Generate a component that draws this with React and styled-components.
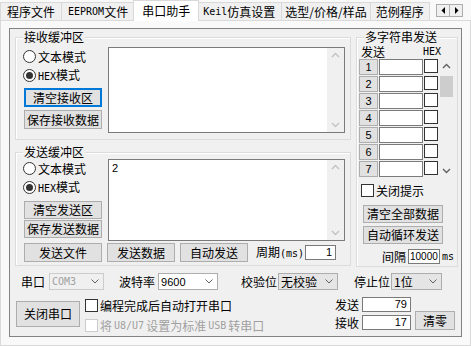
import React from "react";
import styled, { createGlobalStyle } from "styled-components";

const GlobalStyle = createGlobalStyle`
  html, body {
    margin: 0;
    padding: 0;
  }
  body {
    background: #f9f9f9;
    font-family: "Noto Sans CJK SC", "Liberation Sans", sans-serif;
    font-size: 12px;
    line-height: 14px;
    color: #000;
  }
`;

const Window = styled.div`
  width: 471px;
  height: 346px;
  display: flex;
  flex-direction: column;
  background: #f9f9f9;
  overflow: hidden;
`;

const TabStrip = styled.div`
  height: 20px;
  display: flex;
  align-items: flex-end;
  position: relative;
  z-index: 1;
`;

const Tab = styled.div`
  box-sizing: border-box;
  height: ${(p) => (p.$active ? 21 : 18)}px;
  margin: 0 ${(p) => (p.$active ? -2 : 0)}px ${(p) => (p.$active ? -1 : 0)}px;
  margin-left: ${(p) => (p.$active ? -2 : -1)}px;
  padding: 0 ${(p) => (p.$active ? 8 : p.$px ?? 6)}px;
  display: flex;
  align-items: center;
  background: ${(p) => (p.$active ? "#ffffff" : "#f0f0f0")};
  border: 1px solid #d9d9d9;
  border-bottom: none;
  white-space: nowrap;
  position: relative;
  z-index: ${(p) => (p.$active ? 2 : 1)};
  &:first-child {
    margin-left: 0;
  }
`;

const TabArrows = styled.div`
  margin-left: auto;
  margin-right: 8px;
  align-self: center;
  display: flex;
  background: #f0f0f0;
  position: relative;
  z-index: 3;
`;

const ArrowBox = styled.div`
  width: 14px;
  height: 13px;
  box-sizing: border-box;
  border: 1px solid #adadad;
  margin-left: -1px;
  display: flex;
  align-items: center;
  justify-content: center;
  background: #f0f0f0;
`;

const TabBody = styled.div`
  flex: 1;
  box-sizing: border-box;
  border: 1px solid #d9d9d9;
  padding: 7px 8px 8px;
  background: #f9f9f9;
`;

const Frame = styled.div`
  box-sizing: border-box;
  height: 309px;
  border: 1px solid #828282;
  background: #f0f0f0;
  display: flex;
  flex-direction: column;
`;

const TopArea = styled.div`
  display: flex;
  gap: 5px;
  padding: 1px 0 0 5px;
`;

const LeftCol = styled.div`
  width: 336px;
  display: flex;
  flex-direction: column;
  gap: 5px;
`;

const Group = styled.fieldset`
  box-sizing: border-box;
  margin: 0;
  min-width: 0;
  width: ${(p) => p.$w}px;
  height: ${(p) => p.$h}px;
  padding: ${(p) => p.$pad};
  border: 1px solid #dcdcdc;
  box-shadow: inset 1px 1px 0 #ffffff;
`;

const Legend = styled.legend`
  padding: 0 1px;
  margin-left: ${(p) => p.$ml || 0}px;
  line-height: 14px;
  background: #f0f0f0;
`;

const BufferGrid = styled.div`
  display: grid;
  grid-template-columns: 79px 1fr;
  column-gap: 6px;
`;

const SideCol = styled.div`
  display: flex;
  flex-direction: column;
`;

const RadioRow = styled.label`
  height: 19px;
  display: flex;
  align-items: center;
  gap: 2px;
`;

const RadioDot = styled.span`
  box-sizing: border-box;
  width: 13px;
  height: 13px;
  border-radius: 50%;
  border: 1px solid #333333;
  background: #ffffff;
  display: flex;
  align-items: center;
  justify-content: center;
  &::after {
    content: "";
    width: 7px;
    height: 7px;
    border-radius: 50%;
    background: #333333;
    display: ${(p) => (p.$checked ? "block" : "none")};
  }
`;

const Btn = styled.button`
  box-sizing: border-box;
  width: ${(p) => p.$w}px;
  height: ${(p) => p.$h || 19}px;
  margin: ${(p) => p.$m || 0};
  padding: 0;
  flex: none;
  background: #e1e1e1;
  border: 1px solid ${(p) => (p.$focus ? "#0078d7" : "#adadad")};
  box-shadow: ${(p) => (p.$focus ? "inset 0 0 0 1px #0078d7" : "none")};
  font: inherit;
  line-height: 14px;
  color: #000;
`;

const Memo = styled.div`
  box-sizing: border-box;
  height: ${(p) => p.$h}px;
  border: 1px solid #7a7a7a;
  background: #ffffff;
  display: flex;
`;

const MemoText = styled.div`
  flex: 1;
  padding: 1px 3px;
  font-family: "Liberation Sans", sans-serif;
  font-size: 11px;
`;

const VScroll = styled.div`
  width: ${(p) => p.$w || 17}px;
  flex: none;
  background: #f0f0f0;
  display: flex;
  flex-direction: column;
  align-items: center;
  padding: 4px 0;
  box-sizing: border-box;
  & > svg:last-child {
    margin-top: auto;
  }
`;

const Thumb = styled.div`
  width: 13px;
  height: 21px;
  background: #cdcdcd;
  margin-top: 7px;
`;

const SendRow = styled.div`
  display: flex;
  align-items: center;
  margin-top: 2px;
  gap: 5px;
`;

const Caption = styled.span`
  margin-left: ${(p) => p.$ml || 0}px;
  white-space: nowrap;
`;

const Mono = styled.span`
  font-family: "DejaVu Sans Mono", "Liberation Mono", monospace;
  font-size: 10px;
`;

const NumBox = styled.div`
  box-sizing: border-box;
  width: ${(p) => p.$w}px;
  height: 15px;
  margin-left: ${(p) => p.$ml || 0}px;
  border: 1px solid #7a7a7a;
  background: #ffffff;
  font-family: "Liberation Sans", sans-serif;
  font-size: ${(p) => p.$fs || 11}px;
  line-height: 13px;
  text-align: ${(p) => p.$align || "right"};
  padding: 0 ${(p) => p.$px ?? 3}px;
  overflow: hidden;
  white-space: nowrap;
`;

const MultiHeader = styled.div`
  height: 15px;
  display: flex;
  justify-content: space-between;
  align-items: flex-end;
  padding: 0 14px 0 2px;
`;

const MultiList = styled.div`
  display: flex;
  gap: 1px;
  height: 119px;
`;

const MultiRows = styled.div`
  display: flex;
  flex-direction: column;
  gap: 1px;
`;

const MultiRow = styled.div`
  height: 16px;
  display: flex;
  gap: 1px;
  align-items: flex-start;
`;

const IdxBtn = styled.div`
  box-sizing: border-box;
  width: 19px;
  height: 16px;
  background: #e1e1e1;
  border: 1px solid #adadad;
  font-family: "Liberation Sans", sans-serif;
  font-size: 11px;
  line-height: 14px;
  text-align: center;
`;

const TextCell = styled.div`
  box-sizing: border-box;
  width: 44px;
  height: 16px;
  border: 1px solid #7a7a7a;
  background: #ffffff;
`;

const Check = styled.span`
  box-sizing: border-box;
  width: ${(p) => p.$s || 13}px;
  height: ${(p) => p.$s || 13}px;
  flex: none;
  border: 1px solid ${(p) => (p.$disabled ? "#cccccc" : "#333333")};
  background: #ffffff;
`;

const CheckRow = styled.label`
  display: flex;
  align-items: center;
  gap: 2px;
  height: 13px;
  margin: ${(p) => p.$m || 0};
  color: ${(p) => (p.$disabled ? "#a0a0a0" : "#000")};
  white-space: nowrap;
`;

const IntervalRow = styled.div`
  display: flex;
  align-items: center;
  justify-content: flex-end;
  margin-top: 5px;
  gap: 2px;
  padding-right: 1px;
`;

const PortRow = styled.div`
  display: flex;
  align-items: center;
  height: 17px;
  margin-top: 6px;
  padding-left: 11px;
`;

const Combo = styled.div`
  box-sizing: border-box;
  width: ${(p) => p.$w}px;
  height: 17px;
  margin-left: ${(p) => p.$ml || 0}px;
  border: 1px solid ${(p) => (p.$disabled ? "#cccccc" : "#adadad")};
  background: ${(p) => (p.$disabled ? "#f0f0f0" : p.$edit ? "#ffffff" : "#e5e5e5")};
  color: ${(p) => (p.$disabled ? "#a0a0a0" : "#000")};
  display: flex;
  align-items: center;
  justify-content: space-between;
  padding: 0 4px 0 2px;
  white-space: nowrap;
`;

const ComboNum = styled.span`
  font-family: "Liberation Sans", sans-serif;
  font-size: 11px;
`;

const LowerArea = styled.div`
  display: flex;
  align-items: flex-start;
  margin-top: 7px;
  padding: 0 6px;
`;

const CheckCol = styled.div`
  display: flex;
  flex-direction: column;
  gap: 7px;
  margin: 2px 0 0 5px;
`;

const CounterCol = styled.div`
  margin-left: auto;
  display: flex;
  flex-direction: column;
  gap: 3px;
`;

const CounterRow = styled.div`
  display: flex;
  align-items: center;
  height: 15px;
`;

const Chevron = ({ up, color = "#c2c2c2" }) => (
  <svg width="9" height="6" viewBox="0 0 9 6">
    <polyline
      points={up ? "1,5 4.5,1.5 8,5" : "1,1 4.5,4.5 8,1"}
      fill="none"
      stroke={color}
      strokeWidth="1.4"
    />
  </svg>
);

const DropArrow = () => (
  <svg width="8" height="5" viewBox="0 0 8 5">
    <polyline points="0.5,0.5 4,4 7.5,0.5" fill="none" stroke="#606060" strokeWidth="1" />
  </svg>
);

const Tri = ({ left }) => (
  <svg width="5" height="7" viewBox="0 0 5 7">
    <polygon points={left ? "4,0 4,7 0.5,3.5" : "1,0 1,7 4.5,3.5"} fill="#000" />
  </svg>
);

const Radio = ({ checked, children }) => (
  <RadioRow>
    <RadioDot $checked={checked} />
    <span>{children}</span>
  </RadioRow>
);

const TextArea = ({ h, text }) => (
  <Memo $h={h}>
    <MemoText>{text}</MemoText>
    <VScroll>
      <Chevron up />
      <Chevron />
    </VScroll>
  </Memo>
);

export default function App() {
  return (
    <Window>
      <GlobalStyle />
      <TabStrip>
        <Tab>程序文件</Tab>
        <Tab>
          <Mono>EEPROM</Mono>文件
        </Tab>
        <Tab $active>串口助手</Tab>
        <Tab>
          <Mono>Keil</Mono>仿真设置
        </Tab>
        <Tab $px={3}>选型/价格/样品</Tab>
        <Tab $px={5}>范例程序</Tab>
        <TabArrows>
          <ArrowBox>
            <Tri left />
          </ArrowBox>
          <ArrowBox>
            <Tri />
          </ArrowBox>
        </TabArrows>
      </TabStrip>
      <TabBody>
        <Frame>
          <TopArea>
            <LeftCol>
              <Group $w={336} $h={110} $pad="3px 5px 6px 7px">
                <Legend>接收缓冲区</Legend>
                <BufferGrid>
                  <SideCol>
                    <Radio>文本模式</Radio>
                    <Radio checked>
                      <Mono>HEX</Mono>模式
                    </Radio>
                    <Btn $w={78} $m="3px 0 0 1px" $focus>
                      清空接收区
                    </Btn>
                    <Btn $w={78} $m="3px 0 0 1px">
                      保存接收数据
                    </Btn>
                  </SideCol>
                  <TextArea h={86} />
                </BufferGrid>
              </Group>
              <Group $w={336} $h={121} $pad="0 5px 2px 7px">
                <Legend>发送缓冲区</Legend>
                <BufferGrid>
                  <SideCol>
                    <Radio>文本模式</Radio>
                    <Radio checked>
                      <Mono>HEX</Mono>模式
                    </Radio>
                    <Btn $w={78} $h={18} $m="4px 0 0 1px">
                      清空发送区
                    </Btn>
                    <Btn $w={78} $h={18} $m="1px 0 0 1px">
                      保存发送数据
                    </Btn>
                  </SideCol>
                  <TextArea h={82} text="2" />
                </BufferGrid>
                <SendRow>
                  <Btn $w={78} $m="0 0 0 1px">
                    发送文件
                  </Btn>
                  <Btn $w={68}>发送数据</Btn>
                  <Btn $w={68}>自动发送</Btn>
                  <Caption $ml={3}>
                    周期<Mono>(ms)</Mono>
                  </Caption>
                  <NumBox $w={31} $ml={-4}>
                    1
                  </NumBox>
                </SendRow>
              </Group>
            </LeftCol>
            <Group $w={102} $h={237} $pad="0 2px">
              <Legend $ml={5}>多字符串发送</Legend>
              <MultiHeader>
                <span>发送</span>
                <Mono>HEX</Mono>
              </MultiHeader>
              <MultiList>
                <MultiRows>
                  {[1, 2, 3, 4, 5, 6, 7].map((n) => (
                    <MultiRow key={n}>
                      <IdxBtn>{n}</IdxBtn>
                      <TextCell />
                      <Check $s={14} />
                    </MultiRow>
                  ))}
                </MultiRows>
                <VScroll $w={15}>
                  <Chevron up color="#606060" />
                  <Thumb />
                  <Chevron color="#606060" />
                </VScroll>
              </MultiList>
              <CheckRow $m="6px 0 0 2px">
                <Check />
                关闭提示
              </CheckRow>
              <Btn $w={80} $h={18} $m="8px 0 0 4px">
                清空全部数据
              </Btn>
              <Btn $w={80} $h={18} $m="3px 0 0 4px">
                自动循环发送
              </Btn>
              <IntervalRow>
                <span>间隔</span>
                <NumBox $w={32} $align="left" $fs={10} $px={1}>
                  10000
                </NumBox>
                <Mono>ms</Mono>
              </IntervalRow>
            </Group>
          </TopArea>
          <PortRow>
            <Caption>串口</Caption>
            <Combo $w={55} $ml={4} $disabled>
              <Mono>COM3</Mono>
              <DropArrow />
            </Combo>
            <Caption $ml={15}>波特率</Caption>
            <Combo $w={60} $ml={3} $edit>
              <ComboNum>9600</ComboNum>
              <DropArrow />
            </Combo>
            <Caption $ml={23}>校验位</Caption>
            <Combo $w={60} $ml={1}>
              <span>无校验</span>
              <DropArrow />
            </Combo>
            <Caption $ml={16}>停止位</Caption>
            <Combo $w={51} $ml={1}>
              <span>1位</span>
              <DropArrow />
            </Combo>
          </PortRow>
          <LowerArea>
            <Btn $w={64} $h={26} $m="4px 0 0 0">
              关闭串口
            </Btn>
            <CheckCol>
              <CheckRow>
                <Check />
                编程完成后自动打开串口
              </CheckRow>
              <CheckRow $disabled>
                <Check $disabled />
                将<Mono>U8/U7</Mono>设置为标准<Mono>USB</Mono>转串口
              </CheckRow>
            </CheckCol>
            <CounterCol>
              <CounterRow>
                <Caption>发送</Caption>
                <NumBox $w={49} $ml={3}>
                  79
                </NumBox>
              </CounterRow>
              <CounterRow>
                <Caption>接收</Caption>
                <NumBox $w={49} $ml={3}>
                  17
                </NumBox>
              </CounterRow>
            </CounterCol>
            <Btn $w={40} $h={19} $m="14px 0 0 4px">
              清零
            </Btn>
          </LowerArea>
        </Frame>
      </TabBody>
    </Window>
  );
}
